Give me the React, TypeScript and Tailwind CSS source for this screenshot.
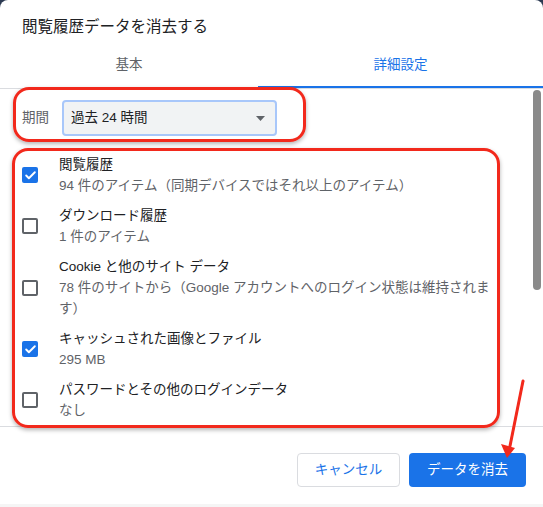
import { Check } from "lucide-react";

type Item = { title: string; detail: string; checked: boolean };

const items: Item[] = [
  { title: "閲覧履歴", detail: "94 件のアイテム（同期デバイスではそれ以上のアイテム）", checked: true },
  { title: "ダウンロード履歴", detail: "1 件のアイテム", checked: false },
  {
    title: "Cookie と他のサイト データ",
    detail: "78 件のサイトから（Google アカウントへのログイン状態は維持されます）",
    checked: false,
  },
  { title: "キャッシュされた画像とファイル", detail: "295 MB", checked: true },
  { title: "パスワードとその他のログインデータ", detail: "なし", checked: false },
];

function Checkbox({ checked }: { checked: boolean }) {
  if (checked) {
    return (
      <div className="flex h-4 w-4 shrink-0 items-center justify-center rounded-[2px] bg-[#1a73e8]">
        <Check className="h-[13px] w-[13px] text-white" strokeWidth={3.5} />
      </div>
    );
  }
  return <div className="h-4 w-4 shrink-0 rounded-[2px] border-2 border-[#5f6368]" />;
}

export default function App() {
  return (
    <div className="h-[507px] w-[543px] overflow-hidden bg-[#2c3a52] font-['Liberation_Sans','Noto_Sans_CJK_JP',sans-serif]">
      <div className="relative flex h-full flex-col rounded-t-[8px] bg-white">
        <h1 className="px-[22px] pt-[16px] text-[15.5px] leading-[22px] text-[#202124]">
          閲覧履歴データを消去する
        </h1>

        {/* tabs */}
        <div className="mt-[6px] flex h-[45px] border-b border-[#dadce0] text-[13.5px]">
          <div className="flex w-[258px] flex-col">
            <div className="flex flex-1 items-center justify-center text-[#5f6368]">基本</div>
            <div className="h-[2px]" />
          </div>
          <div className="flex flex-1 flex-col">
            <div className="flex flex-1 items-center justify-center text-[#1a73e8]">詳細設定</div>
            <div className="h-[2px] bg-[#1a73e8]" />
          </div>
        </div>

        {/* scroll area */}
        <div className="flex h-[338px] overflow-hidden border-b border-[#dadce0]">
          <div className="flex-1 pr-[31px]">
            <div className="flex items-center gap-[13px] pl-[22px] pt-[11px]">
              <span className="text-[13.5px] text-[#5f6368]">期間</span>
              <div className="flex h-[36px] w-[215px] items-center justify-between rounded-[4px] border-2 border-[#a8c7fa] bg-[#f1f3f4] pl-[7px] pr-[10px]">
                <span className="text-[13.5px] text-[#202124]">過去 24 時間</span>
                <svg width="9" height="5" viewBox="0 0 9 5">
                  <path d="M0 0h9L4.5 5z" fill="#5f6368" />
                </svg>
              </div>
            </div>

            <div className="mt-[18px] flex flex-col gap-[9px]">
              {items.map((it) => (
                <div key={it.title} className="flex items-center gap-[21px] pl-[22px]">
                  <Checkbox checked={it.checked} />
                  <div className="text-[13.5px] leading-[21px]">
                    <div className="text-[#202124]">{it.title}</div>
                    <div className="text-[#5f6368]">{it.detail}</div>
                  </div>
                </div>
              ))}
            </div>
          </div>
          <div className="w-[14px] pl-[4px] pt-[1px]">
            <div className="h-[200px] w-[8px] rounded-full bg-[#8a8a8a]" />
          </div>
        </div>

        {/* footer */}
        <div className="flex justify-end gap-[9px] pr-[17px] pt-[26px] text-[13.5px]">
          <button className="h-[34px] w-[103px] rounded-[4px] border border-[#dadce0] bg-white text-[#1a73e8]">
            キャンセル
          </button>
          <button className="h-[34px] w-[117px] rounded-[4px] bg-[#1a73e8] text-white">
            データを消去
          </button>
        </div>
        <div className="mt-auto h-[3px] bg-[#f5f5f5]" />

        {/* annotations */}
        <div className="pointer-events-none absolute left-[13px] top-[87px] h-[55px] w-[293px] rounded-[16px] border-[3px] border-[#f2291c] shadow-[0_2px_4px_rgba(0,0,0,0.3)]" />
        <div className="pointer-events-none absolute left-[12px] top-[148px] h-[280px] w-[488px] rounded-[16px] border-[3px] border-[#f2291c] shadow-[0_2px_4px_rgba(0,0,0,0.3)]" />
        <svg className="pointer-events-none absolute left-[495px] top-[376px]" width="36" height="86" viewBox="0 0 36 86">
          <line x1="28" y1="5" x2="15" y2="70" stroke="#f2291c" strokeWidth="3" strokeLinecap="round" />
          <path d="M6 68 L20 72 L12 82 Z" fill="#f2291c" />
        </svg>
      </div>
    </div>
  );
}
